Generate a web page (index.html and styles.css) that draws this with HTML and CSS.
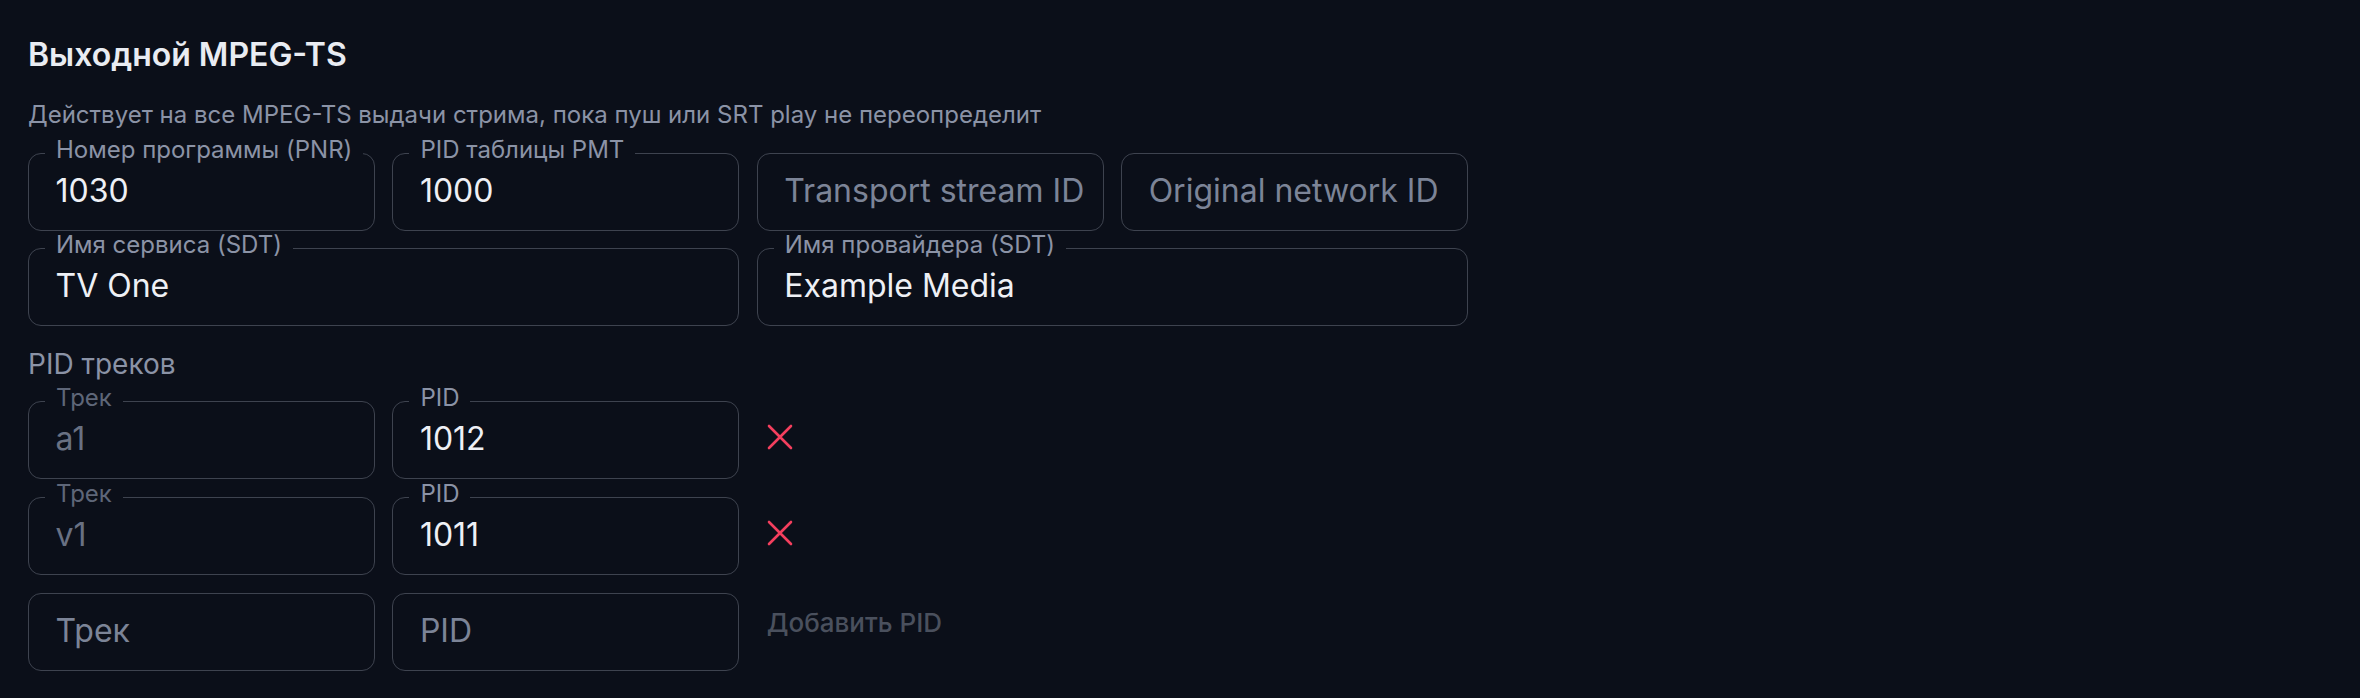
FILE: index.html
```html
<!DOCTYPE html>
<html lang="ru">
<head>
<meta charset="utf-8">
<title>Выходной MPEG-TS</title>
<link rel="stylesheet" href="styles.css">
</head>
<body>
<main class="panel">
  <h2 class="title">Выходной MPEG-TS</h2>
  <p class="hint">Действует на все MPEG-TS выдачи стрима, пока пуш или SRT play не переопределит</p>

  <div class="grid">
    <div class="field">
      <span class="label">Номер программы (PNR)</span>
      <span class="value">1030</span>
    </div>
    <div class="field">
      <span class="label">PID таблицы PMT</span>
      <span class="value">1000</span>
    </div>
    <div class="field">
      <span class="placeholder">Transport stream ID</span>
    </div>
    <div class="field">
      <span class="placeholder">Original network ID</span>
    </div>
    <div class="field wide">
      <span class="label">Имя сервиса (SDT)</span>
      <span class="value">TV One</span>
    </div>
    <div class="field wide">
      <span class="label">Имя провайдера (SDT)</span>
      <span class="value">Example Media</span>
    </div>
  </div>

  <div class="section-label">PID треков</div>

  <div class="tracks">
    <div class="track-row">
      <div class="field disabled">
        <span class="label">Трек</span>
        <span class="value">a1</span>
      </div>
      <div class="field">
        <span class="label">PID</span>
        <span class="value">1012</span>
      </div>
      <div class="action">
        <button class="remove" type="button" aria-label="Удалить">
          <svg width="26" height="26" viewBox="0 0 26 26"><path d="M2 2 L24 24 M24 2 L2 24" stroke="#f43f5e" stroke-width="2.6" stroke-linecap="round" fill="none"/></svg>
        </button>
      </div>
    </div>
    <div class="track-row">
      <div class="field disabled">
        <span class="label">Трек</span>
        <span class="value">v1</span>
      </div>
      <div class="field">
        <span class="label">PID</span>
        <span class="value">1011</span>
      </div>
      <div class="action">
        <button class="remove" type="button" aria-label="Удалить">
          <svg width="26" height="26" viewBox="0 0 26 26"><path d="M2 2 L24 24 M24 2 L2 24" stroke="#f43f5e" stroke-width="2.6" stroke-linecap="round" fill="none"/></svg>
        </button>
      </div>
    </div>
    <div class="track-row">
      <div class="field">
        <span class="placeholder">Трек</span>
      </div>
      <div class="field">
        <span class="placeholder">PID</span>
      </div>
      <div class="action">
        <button class="add" type="button">Добавить PID</button>
      </div>
    </div>
  </div>
</main>
</body>
</html>
```

FILE: styles.css
```css
html, body {
  margin: 0;
  padding: 0;
  background: #0b0f19;
}

body {
  font-family: Inter, "Noto Sans", "DejaVu Sans", sans-serif;
  color: #e9ecf2;
}

.panel {
  width: 1440px;
  padding: 35px 0 0 28px;
}

.title {
  margin: 0;
  font-size: 32px;
  line-height: 40px;
  font-weight: 600;
  color: #e9ecf2;
}

.hint {
  margin: 24.5px 0 0;
  font-size: 24px;
  line-height: 30px;
  color: #8b93a6;
}

.grid {
  margin-top: 23.5px;
  display: grid;
  grid-template-columns: repeat(4, 1fr);
  column-gap: 17.5px;
  row-gap: 17px;
}

.wide {
  grid-column: span 2;
}

.field {
  position: relative;
  box-sizing: border-box;
  height: 78px;
  border: 1.5px solid #3e434f;
  border-radius: 13px;
  display: flex;
  align-items: center;
  padding: 0 0 2px 26.5px;
}

.label {
  position: absolute;
  top: -16.2px;
  left: 16px;
  padding: 0 11px;
  background: #0b0f19;
  font-size: 24px;
  line-height: 24px;
  color: #8b93a6;
  white-space: nowrap;
}

.value {
  font-size: 32px;
  line-height: 38px;
  color: #eef0f5;
}

.placeholder {
  font-size: 32px;
  line-height: 38px;
  color: #7c8497;
}

.disabled .label {
  color: #5e6678;
}

.disabled .value {
  color: #697183;
}

.section-label {
  margin-top: 21px;
  font-size: 28px;
  line-height: 34px;
  color: #8b93a6;
}

.tracks {
  margin-top: 20px;
  display: flex;
  flex-direction: column;
  gap: 18px;
}

.track-row {
  display: grid;
  grid-template-columns: repeat(4, 1fr);
  column-gap: 17.5px;
}

.action {
  padding-left: 10px;
  display: flex;
  align-items: flex-start;
}

.remove {
  margin-top: 23px;
  padding: 0;
  border: 0;
  background: none;
  width: 26px;
  height: 26px;
  display: block;
  cursor: pointer;
}

.remove svg {
  display: block;
}

.add {
  margin-top: 14.5px;
  padding: 0;
  border: 0;
  background: none;
  font-family: inherit;
  font-size: 26px;
  line-height: 30px;
  font-weight: 500;
  color: #4a505d;
  cursor: pointer;
}
```
